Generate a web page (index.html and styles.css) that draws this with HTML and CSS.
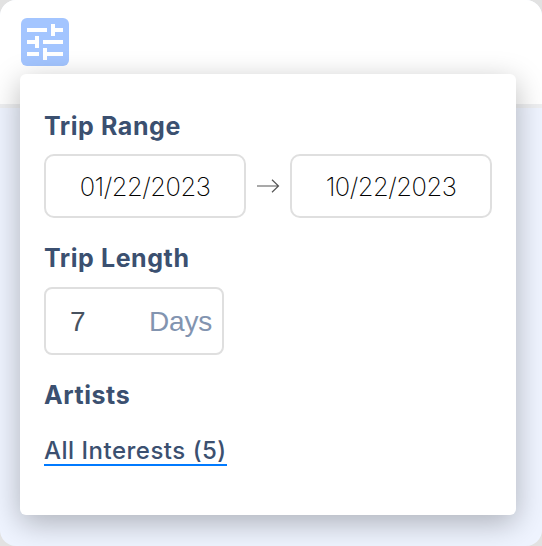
FILE: index.html
```html
<!DOCTYPE html>
<html lang="en">
<head>
<meta charset="utf-8">
<title>Trip filters</title>
<link rel="stylesheet" href="styles.css">
</head>
<body>
<main class="app">
  <header class="toolbar">
    <button class="filter-button" aria-label="Filters">
      <svg width="48" height="48" viewBox="0 0 48 48" fill="#fff" shape-rendering="crispEdges">
        <path d="M6 10h20v4H6zM30 6h4v4h8v4h-8v4h-4zM6 22h8v-4h4v12h-4v-4H6zM22 22h20v4H22zM6 34h12v4H6zM22 30h4v4h16v4H26v4h-4z"/>
      </svg>
    </button>
  </header>
  <section class="panel">
    <h2 class="heading">Trip Range</h2>
    <div class="range">
      <div class="field date"><span>01/22/2023</span></div>
      <svg class="arrow" width="24" height="16" viewBox="0 0 24 16" fill="none" stroke="#555" stroke-width="1.2">
        <path d="M1 8H22.5M16 1.7L22.5 8L16 14.3"/>
      </svg>
      <div class="field date"><span>10/22/2023</span></div>
    </div>
    <h2 class="heading heading-length">Trip Length</h2>
    <div class="field length"><span class="number">7</span><span class="unit">Days</span></div>
    <h2 class="heading heading-artists">Artists</h2>
    <a class="interests">All Interests (5)</a>
  </section>
</main>
</body>
</html>
```
FILE: styles.css
```css
* { box-sizing: border-box; }
body {
  margin: 0;
  background: #e2e2e2;
  font-family: Inter, "Liberation Sans", sans-serif;
  color: #3b5070;
}
.app {
  position: relative;
  height: 546px;
  border-radius: 16px;
  overflow: hidden;
  background: #eff4ff;
}
.toolbar {
  height: 108px;
  padding: 18px 21px;
  background: #fff;
  border-bottom: 4px solid #eeeff1;
}
.filter-button {
  display: block;
  width: 48px;
  height: 48px;
  padding: 0;
  border: 0;
  border-radius: 6px;
  background: #a3c5ff;
}
.filter-button svg { display: block; }
.panel {
  position: absolute;
  top: 74px;
  left: 20px;
  width: 496px;
  height: 441px;
  padding: 36px 24px;
  border-radius: 6px;
  background: #fff;
  box-shadow: 0 8px 30px rgba(0, 0, 0, .28);
}
.heading {
  margin: 0;
  font-size: 25px;
  line-height: 32px;
  font-weight: 650;
  letter-spacing: .57px;
  white-space: nowrap;
}
.range {
  display: flex;
  align-items: center;
  justify-content: space-between;
  margin-top: 12px;
}
.field {
  display: flex;
  align-items: center;
  border: 2px solid #dfdfdf;
  border-radius: 10px;
}
.date {
  justify-content: center;
  width: 202px;
  height: 64px;
  font-size: 25.5px;
  font-weight: 200;
  letter-spacing: -.5px;
  color: #000;
}
.heading-length { margin-top: 24px; }
.length {
  justify-content: space-between;
  width: 180px;
  height: 68px;
  margin-top: 13px;
  padding: 1px 10px 0 24px;
  border-radius: 8px;
  font-family: "Liberation Sans", sans-serif;
  font-size: 28px;
}
.number { color: #48525f; }
.unit { color: #8294b0; letter-spacing: -.2px; }
.heading-artists { margin-top: 24px; }
.interests {
  display: inline-block;
  margin-top: 26px;
  border-bottom: 2px solid #007aff;
  font-size: 24px;
  line-height: 27px;
  font-weight: 500;
  letter-spacing: .5px;
  white-space: nowrap;
}
```
